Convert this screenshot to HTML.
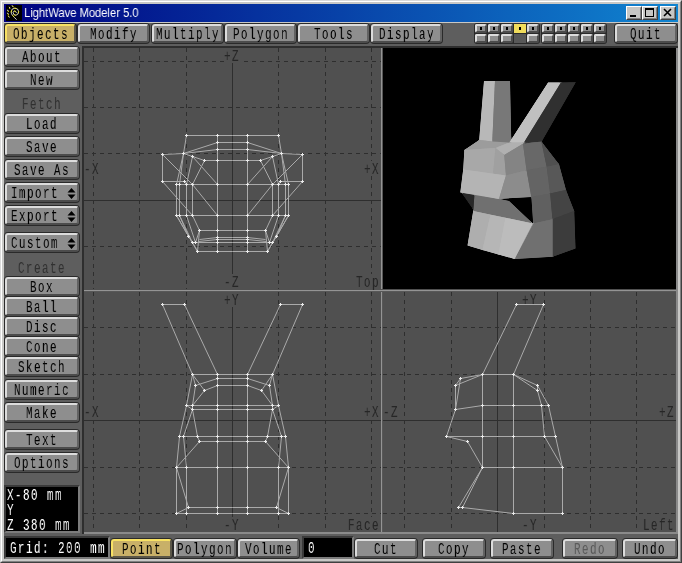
<!DOCTYPE html>
<html><head><meta charset="utf-8"><title>LightWave Modeler 5.0</title>
<style>
html,body{margin:0;padding:0;}
body{width:682px;height:563px;position:relative;overflow:hidden;background:#c8c8c6;font-family:"Liberation Mono",monospace;}
.a{position:absolute;}
#frame{left:0;top:0;width:682px;height:563px;box-sizing:border-box;background:#c8c8c6;
  border-top:1px solid #dadada;border-left:1px solid #dadada;border-right:1px solid #404040;border-bottom:1px solid #404040;}
#frame2{left:1px;top:1px;width:680px;height:561px;box-sizing:border-box;
  border-top:1px solid #fff;border-left:1px solid #fff;border-right:1px solid #808080;border-bottom:1px solid #808080;}
#title{left:4px;top:4px;width:674px;height:18px;background:linear-gradient(to right,#000080 0%,#1084d0 100%);}
#ttext{will-change:transform;left:24px;top:3.5px;height:18px;line-height:18px;color:#fff;font-family:"Liberation Sans",sans-serif;font-size:13px;white-space:nowrap;transform-origin:0 50%;transform:scaleX(0.86);}
#app{left:4px;top:23px;width:674px;height:536px;background:#5e5e5e;}
.wb{top:6px;width:16px;height:14px;box-sizing:border-box;background:#c6c6c4;border:1px solid;border-color:#fff #404040 #404040 #fff;}
.wb i{position:absolute;left:0;top:0;right:0;bottom:0;border:1px solid;border-color:#c6c6c4 #808080 #808080 #c6c6c4;}
.btn{box-sizing:border-box;background:#2a2a2a;border-radius:4px;}
.btn b{position:absolute;left:1px;top:1px;right:1px;bottom:1px;box-sizing:border-box;border-radius:3px;background:#8e8e8e;border:2px solid;border-color:#dcdcdc #626262 #4c4c4c #dcdcdc;font-weight:normal;}
.btn.y b{background:#c8b068;border-color:#f8e264 #5a5648 #5a5648 #f8e264;}
.t{will-change:transform;position:absolute;white-space:nowrap;font-size:16.5px;line-height:17px;height:17px;color:#000;transform-origin:0 0;transform:scaleX(0.66);letter-spacing:2.22px;}
.lab{color:#303030;}
.dis{color:#5a5a5a;}
.w{color:#fff;}
.vl{color:#262626;}
</style></head>
<body>
<div class="a" id="frame"></div><div class="a" id="frame2"></div>
<div class="a" id="title"></div>
<svg class="a" style="left:6px;top:5px" width="16" height="16" viewBox="0 0 16 16">
<rect width="16" height="16" fill="#000"/>
<g fill="none" stroke-width="0.95" stroke-linecap="round" stroke-linejoin="round">
<path d="M10.3 7.5A1.7 2 0 0 0 7.1 7.3A3 3 0 0 0 9.9 10.3A3.4 3.7 0 0 0 12.6 6.6A3.8 3.5 0 0 0 8.8 3.2A3.7 3.9 0 0 0 5.2 7.1C5.2 9.5 7 11 10.3 14.4" stroke="#e0e0e0"/>
<path d="M10.3 7.5A1.7 2 0 0 0 7.1 7.3A3 3 0 0 0 9.9 10.3A3.4 3.7 0 0 0 12.6 6.6A3.8 3.5 0 0 0 8.8 3.2A3.7 3.9 0 0 0 5.2 7.1C5.2 9.5 7 11 10.3 14.4" stroke="#f0e800" stroke-dasharray="1.3 4.2" stroke-dashoffset="-1.2"/>
<path d="M6.2 0.6L6.6 1.4M3.2 2.2L4 2.8M1.3 5.2L2.2 5.6M1.3 8.2L2.2 8.6M2.6 11.2L3.2 12.2" stroke="#e0e0e0"/>
<path d="M7 1.6L7.4 1.8M3.4 3.2L3.8 3.4M2.2 6.2L2.4 6.6M2.2 9.2L2.4 9.6M2.2 11L2.6 11.2" stroke="#f0e800"/>
</g>
</svg>
<div class="a" id="ttext">LightWave Modeler 5.0</div>
<div class="a wb" style="left:626px"><i></i><svg class="a" style="left:0;top:0" width="14" height="12"><rect x="3" y="8" width="6" height="2" fill="#000"/></svg></div>
<div class="a wb" style="left:642px"><i></i><svg class="a" style="left:0;top:0" width="14" height="12"><rect x="2.5" y="1.5" width="8" height="8" fill="none" stroke="#000"/><rect x="2" y="1" width="9" height="2" fill="#000"/></svg></div>
<div class="a wb" style="left:660px"><i></i><svg class="a" style="left:0;top:0" width="14" height="12"><path d="M3 2l7 7M10 2l-7 7" stroke="#000" stroke-width="1.6" fill="none"/></svg></div>
<div class="a" id="app"></div>
<div class="a btn y" style="left:4px;top:23px;width:73px;height:21px"><b></b><span class="t " style="left:8.5px;top:3.0px">Objects</span></div>
<div class="a btn " style="left:77px;top:23px;width:73px;height:21px"><b></b><span class="t " style="left:12.5px;top:3.0px">Modify</span></div>
<div class="a btn " style="left:151px;top:23px;width:73px;height:21px"><b></b><span class="t " style="left:4.5px;top:3.0px">Multiply</span></div>
<div class="a btn " style="left:224px;top:23px;width:73px;height:21px"><b></b><span class="t " style="left:8.5px;top:3.0px">Polygon</span></div>
<div class="a btn " style="left:297px;top:23px;width:73px;height:21px"><b></b><span class="t " style="left:16.5px;top:3.0px">Tools</span></div>
<div class="a btn " style="left:370px;top:23px;width:73px;height:21px"><b></b><span class="t " style="left:8.5px;top:3.0px">Display</span></div>
<div class="a btn " style="left:614px;top:23px;width:64px;height:21px"><b></b><span class="t " style="left:16.0px;top:3.0px">Quit</span></div>
<div class="a" style="left:474px;top:23px;width:66px;height:21px;border-radius:3px;background:#2a2a2a"></div>
<div class="a" style="left:541px;top:23px;width:66px;height:21px;border-radius:3px;background:#2a2a2a"></div>
<div class="a" style="left:475px;top:24px;width:12px;height:9px;box-sizing:border-box;border-radius:2px;background:#8e8e8e;border:2px solid;border-color:#dcdcdc #4c4c4c #4c4c4c #dcdcdc"></div>
<div class="a" style="left:475px;top:34px;width:12px;height:9px;box-sizing:border-box;border-radius:2px;background:#8e8e8e;border:2px solid;border-color:#dcdcdc #4c4c4c #4c4c4c #dcdcdc"></div>
<div class="a" style="left:480px;top:27px;width:2px;height:3px;background:#000"></div>
<div class="a" style="left:488px;top:24px;width:12px;height:9px;box-sizing:border-box;border-radius:2px;background:#8e8e8e;border:2px solid;border-color:#dcdcdc #4c4c4c #4c4c4c #dcdcdc"></div>
<div class="a" style="left:488px;top:34px;width:12px;height:9px;box-sizing:border-box;border-radius:2px;background:#8e8e8e;border:2px solid;border-color:#dcdcdc #4c4c4c #4c4c4c #dcdcdc"></div>
<div class="a" style="left:493px;top:27px;width:2px;height:3px;background:#000"></div>
<div class="a" style="left:501px;top:24px;width:12px;height:9px;box-sizing:border-box;border-radius:2px;background:#8e8e8e;border:2px solid;border-color:#dcdcdc #4c4c4c #4c4c4c #dcdcdc"></div>
<div class="a" style="left:501px;top:34px;width:12px;height:9px;box-sizing:border-box;border-radius:2px;background:#8e8e8e;border:2px solid;border-color:#dcdcdc #4c4c4c #4c4c4c #dcdcdc"></div>
<div class="a" style="left:506px;top:27px;width:2px;height:3px;background:#000"></div>
<div class="a" style="left:514px;top:24px;width:12px;height:9px;background:#f0dc5c"></div>
<div class="a" style="left:514px;top:34px;width:12px;height:9px;background:#585858"></div>
<div class="a" style="left:519px;top:27px;width:2px;height:3px;background:#000"></div>
<div class="a" style="left:527px;top:24px;width:12px;height:9px;box-sizing:border-box;border-radius:2px;background:#8e8e8e;border:2px solid;border-color:#dcdcdc #4c4c4c #4c4c4c #dcdcdc"></div>
<div class="a" style="left:527px;top:34px;width:12px;height:9px;box-sizing:border-box;border-radius:2px;background:#8e8e8e;border:2px solid;border-color:#dcdcdc #4c4c4c #4c4c4c #dcdcdc"></div>
<div class="a" style="left:532px;top:27px;width:2px;height:3px;background:#000"></div>
<div class="a" style="left:542px;top:24px;width:12px;height:9px;box-sizing:border-box;border-radius:2px;background:#8e8e8e;border:2px solid;border-color:#dcdcdc #4c4c4c #4c4c4c #dcdcdc"></div>
<div class="a" style="left:542px;top:34px;width:12px;height:9px;box-sizing:border-box;border-radius:2px;background:#8e8e8e;border:2px solid;border-color:#dcdcdc #4c4c4c #4c4c4c #dcdcdc"></div>
<div class="a" style="left:547px;top:27px;width:2px;height:3px;background:#000"></div>
<div class="a" style="left:555px;top:24px;width:12px;height:9px;box-sizing:border-box;border-radius:2px;background:#8e8e8e;border:2px solid;border-color:#dcdcdc #4c4c4c #4c4c4c #dcdcdc"></div>
<div class="a" style="left:555px;top:34px;width:12px;height:9px;box-sizing:border-box;border-radius:2px;background:#8e8e8e;border:2px solid;border-color:#dcdcdc #4c4c4c #4c4c4c #dcdcdc"></div>
<div class="a" style="left:560px;top:27px;width:2px;height:3px;background:#000"></div>
<div class="a" style="left:568px;top:24px;width:12px;height:9px;box-sizing:border-box;border-radius:2px;background:#8e8e8e;border:2px solid;border-color:#dcdcdc #4c4c4c #4c4c4c #dcdcdc"></div>
<div class="a" style="left:568px;top:34px;width:12px;height:9px;box-sizing:border-box;border-radius:2px;background:#8e8e8e;border:2px solid;border-color:#dcdcdc #4c4c4c #4c4c4c #dcdcdc"></div>
<div class="a" style="left:573px;top:27px;width:2px;height:3px;background:#000"></div>
<div class="a" style="left:581px;top:24px;width:12px;height:9px;box-sizing:border-box;border-radius:2px;background:#8e8e8e;border:2px solid;border-color:#dcdcdc #4c4c4c #4c4c4c #dcdcdc"></div>
<div class="a" style="left:581px;top:34px;width:12px;height:9px;box-sizing:border-box;border-radius:2px;background:#8e8e8e;border:2px solid;border-color:#dcdcdc #4c4c4c #4c4c4c #dcdcdc"></div>
<div class="a" style="left:586px;top:27px;width:2px;height:3px;background:#000"></div>
<div class="a" style="left:594px;top:24px;width:12px;height:9px;box-sizing:border-box;border-radius:2px;background:#8e8e8e;border:2px solid;border-color:#dcdcdc #4c4c4c #4c4c4c #dcdcdc"></div>
<div class="a" style="left:594px;top:34px;width:12px;height:9px;box-sizing:border-box;border-radius:2px;background:#8e8e8e;border:2px solid;border-color:#dcdcdc #4c4c4c #4c4c4c #dcdcdc"></div>
<div class="a" style="left:599px;top:27px;width:2px;height:3px;background:#000"></div>
<div class="a btn " style="left:4px;top:46px;width:76px;height:21px"><b></b><span class="t " style="left:18.0px;top:3.0px">About</span></div>
<div class="a btn " style="left:4px;top:69px;width:76px;height:21px"><b></b><span class="t " style="left:26.0px;top:3.0px">New</span></div>
<div class="a btn " style="left:4px;top:113px;width:76px;height:21px"><b></b><span class="t " style="left:22.0px;top:3.0px">Load</span></div>
<div class="a btn " style="left:4px;top:136px;width:76px;height:21px"><b></b><span class="t " style="left:22.0px;top:3.0px">Save</span></div>
<div class="a btn " style="left:4px;top:159px;width:76px;height:21px"><b></b><span class="t " style="left:10.0px;top:3.0px">Save As</span></div>
<div class="a btn " style="left:4px;top:182px;width:76px;height:21px"><b></b><span class="t " style="left:7.0px;top:3.0px">Import</span></div>
<svg class="a" style="left:67px;top:188px" width="9" height="11" viewBox="0 0 9 11"><path d="M4.5 0L8.5 4.5H0.5ZM0.5 6.5H8.5L4.5 11Z" fill="#000"/></svg>
<div class="a btn " style="left:4px;top:205px;width:76px;height:21px"><b></b><span class="t " style="left:7.0px;top:3.0px">Export</span></div>
<svg class="a" style="left:67px;top:211px" width="9" height="11" viewBox="0 0 9 11"><path d="M4.5 0L8.5 4.5H0.5ZM0.5 6.5H8.5L4.5 11Z" fill="#000"/></svg>
<div class="a btn " style="left:4px;top:232px;width:76px;height:21px"><b></b><span class="t " style="left:7.0px;top:3.0px">Custom</span></div>
<svg class="a" style="left:67px;top:238px" width="9" height="11" viewBox="0 0 9 11"><path d="M4.5 0L8.5 4.5H0.5ZM0.5 6.5H8.5L4.5 11Z" fill="#000"/></svg>
<div class="a btn " style="left:4px;top:276px;width:76px;height:21px"><b></b><span class="t " style="left:26.0px;top:3.0px">Box</span></div>
<div class="a btn " style="left:4px;top:296px;width:76px;height:21px"><b></b><span class="t " style="left:22.0px;top:3.0px">Ball</span></div>
<div class="a btn " style="left:4px;top:316px;width:76px;height:21px"><b></b><span class="t " style="left:22.0px;top:3.0px">Disc</span></div>
<div class="a btn " style="left:4px;top:336px;width:76px;height:21px"><b></b><span class="t " style="left:22.0px;top:3.0px">Cone</span></div>
<div class="a btn " style="left:4px;top:356px;width:76px;height:21px"><b></b><span class="t " style="left:14.0px;top:3.0px">Sketch</span></div>
<div class="a btn " style="left:4px;top:379px;width:76px;height:21px"><b></b><span class="t " style="left:10.0px;top:3.0px">Numeric</span></div>
<div class="a btn " style="left:4px;top:402px;width:76px;height:21px"><b></b><span class="t " style="left:22.0px;top:3.0px">Make</span></div>
<div class="a btn " style="left:4px;top:429px;width:76px;height:21px"><b></b><span class="t " style="left:22.0px;top:3.0px">Text</span></div>
<div class="a btn " style="left:4px;top:452px;width:76px;height:21px"><b></b><span class="t " style="left:10.0px;top:3.0px">Options</span></div>
<span class="t lab" style="left:22.3px;top:96px">Fetch</span>
<span class="t lab" style="left:18.3px;top:259.5px">Create</span>
<div class="a" style="left:4px;top:485px;width:76px;height:48px;box-sizing:border-box;background:#000;border:2px solid;border-color:#3a3a3a #7c7c7c #7c7c7c #3a3a3a"></div>
<span class="t w" style="left:7px;top:487px">X-80 mm</span>
<span class="t w" style="left:7px;top:502px">Y</span>
<span class="t w" style="left:7px;top:517px">Z 380 mm</span>
<div class="a" style="left:4px;top:536px;width:106px;height:23px;box-sizing:border-box;background:#000;border:2px solid;border-color:#3a3a3a #7c7c7c #7c7c7c #3a3a3a"></div>
<span class="t w" style="left:10px;top:540px">Grid: 200 mm</span>
<div class="a btn y" style="left:110px;top:538px;width:63px;height:21px"><b></b><span class="t " style="left:11.5px;top:3.0px">Point</span></div>
<div class="a btn " style="left:173px;top:538px;width:64px;height:21px"><b></b><span class="t " style="left:4.0px;top:3.0px">Polygon</span></div>
<div class="a btn " style="left:237px;top:538px;width:63px;height:21px"><b></b><span class="t " style="left:7.5px;top:3.0px">Volume</span></div>
<div class="a" style="left:302px;top:536px;width:52px;height:23px;box-sizing:border-box;background:#000;border:2px solid;border-color:#3a3a3a #7c7c7c #7c7c7c #3a3a3a"></div>
<span class="t w" style="left:308px;top:540px">0</span>
<div class="a btn " style="left:354px;top:538px;width:64px;height:21px"><b></b><span class="t " style="left:20.0px;top:3.0px">Cut</span></div>
<div class="a btn " style="left:422px;top:538px;width:64px;height:21px"><b></b><span class="t " style="left:16.0px;top:3.0px">Copy</span></div>
<div class="a btn " style="left:490px;top:538px;width:64px;height:21px"><b></b><span class="t " style="left:12.0px;top:3.0px">Paste</span></div>
<div class="a btn " style="left:562px;top:538px;width:56px;height:21px"><b></b><span class="t dis" style="left:12.0px;top:3.0px">Redo</span></div>
<div class="a btn " style="left:622px;top:538px;width:56px;height:21px"><b></b><span class="t " style="left:12.0px;top:3.0px">Undo</span></div>
<svg class="a" style="left:0;top:0" width="682" height="563" viewBox="0 0 682 563" shape-rendering="crispEdges">
<rect x="82" y="46" width="596" height="488" fill="#2e2e2e"/>
<rect x="84" y="48" width="594" height="486" fill="#8a8a8a"/>
<rect x="84" y="48" width="592" height="484" fill="#505050"/>
<rect x="383" y="48" width="293" height="241" fill="#000"/>
<line x1="93.5" y1="48" x2="93.5" y2="290" stroke="#2e2e2e" stroke-width="1" stroke-dasharray="4 4" stroke-dashoffset="0"/>
<line x1="139.5" y1="48" x2="139.5" y2="290" stroke="#2e2e2e" stroke-width="1" stroke-dasharray="4 4" stroke-dashoffset="0"/>
<line x1="186.5" y1="48" x2="186.5" y2="290" stroke="#2e2e2e" stroke-width="1" stroke-dasharray="4 4" stroke-dashoffset="0"/>
<line x1="232.5" y1="48" x2="232.5" y2="290" stroke="#2e2e2e" stroke-width="1"/>
<line x1="278.5" y1="48" x2="278.5" y2="290" stroke="#2e2e2e" stroke-width="1" stroke-dasharray="4 4" stroke-dashoffset="0"/>
<line x1="325.5" y1="48" x2="325.5" y2="290" stroke="#2e2e2e" stroke-width="1" stroke-dasharray="4 4" stroke-dashoffset="0"/>
<line x1="371.5" y1="48" x2="371.5" y2="290" stroke="#2e2e2e" stroke-width="1" stroke-dasharray="4 4" stroke-dashoffset="0"/>
<line x1="84" y1="61.5" x2="381" y2="61.5" stroke="#2e2e2e" stroke-width="1" stroke-dasharray="4 4" stroke-dashoffset="0"/>
<line x1="84" y1="107.5" x2="381" y2="107.5" stroke="#2e2e2e" stroke-width="1" stroke-dasharray="4 4" stroke-dashoffset="0"/>
<line x1="84" y1="153.5" x2="381" y2="153.5" stroke="#2e2e2e" stroke-width="1" stroke-dasharray="4 4" stroke-dashoffset="0"/>
<line x1="84" y1="200.5" x2="381" y2="200.5" stroke="#2e2e2e" stroke-width="1"/>
<line x1="84" y1="246.5" x2="381" y2="246.5" stroke="#2e2e2e" stroke-width="1" stroke-dasharray="4 4" stroke-dashoffset="0"/>
<line x1="93.5" y1="292" x2="93.5" y2="532" stroke="#2e2e2e" stroke-width="1" stroke-dasharray="4 4" stroke-dashoffset="0"/>
<line x1="139.5" y1="292" x2="139.5" y2="532" stroke="#2e2e2e" stroke-width="1" stroke-dasharray="4 4" stroke-dashoffset="0"/>
<line x1="186.5" y1="292" x2="186.5" y2="532" stroke="#2e2e2e" stroke-width="1" stroke-dasharray="4 4" stroke-dashoffset="0"/>
<line x1="232.5" y1="292" x2="232.5" y2="532" stroke="#2e2e2e" stroke-width="1"/>
<line x1="278.5" y1="292" x2="278.5" y2="532" stroke="#2e2e2e" stroke-width="1" stroke-dasharray="4 4" stroke-dashoffset="0"/>
<line x1="325.5" y1="292" x2="325.5" y2="532" stroke="#2e2e2e" stroke-width="1" stroke-dasharray="4 4" stroke-dashoffset="0"/>
<line x1="371.5" y1="292" x2="371.5" y2="532" stroke="#2e2e2e" stroke-width="1" stroke-dasharray="4 4" stroke-dashoffset="0"/>
<line x1="84" y1="327.5" x2="381" y2="327.5" stroke="#2e2e2e" stroke-width="1" stroke-dasharray="4 4" stroke-dashoffset="0"/>
<line x1="84" y1="374.5" x2="381" y2="374.5" stroke="#2e2e2e" stroke-width="1" stroke-dasharray="4 4" stroke-dashoffset="0"/>
<line x1="84" y1="420.5" x2="381" y2="420.5" stroke="#2e2e2e" stroke-width="1"/>
<line x1="84" y1="467.5" x2="381" y2="467.5" stroke="#2e2e2e" stroke-width="1" stroke-dasharray="4 4" stroke-dashoffset="0"/>
<line x1="84" y1="513.5" x2="381" y2="513.5" stroke="#2e2e2e" stroke-width="1" stroke-dasharray="4 4" stroke-dashoffset="0"/>
<line x1="404.5" y1="292" x2="404.5" y2="532" stroke="#2e2e2e" stroke-width="1" stroke-dasharray="4 4" stroke-dashoffset="0"/>
<line x1="451.5" y1="292" x2="451.5" y2="532" stroke="#2e2e2e" stroke-width="1" stroke-dasharray="4 4" stroke-dashoffset="0"/>
<line x1="497.5" y1="292" x2="497.5" y2="532" stroke="#2e2e2e" stroke-width="1"/>
<line x1="544.5" y1="292" x2="544.5" y2="532" stroke="#2e2e2e" stroke-width="1" stroke-dasharray="4 4" stroke-dashoffset="0"/>
<line x1="590.5" y1="292" x2="590.5" y2="532" stroke="#2e2e2e" stroke-width="1" stroke-dasharray="4 4" stroke-dashoffset="0"/>
<line x1="636.5" y1="292" x2="636.5" y2="532" stroke="#2e2e2e" stroke-width="1" stroke-dasharray="4 4" stroke-dashoffset="0"/>
<line x1="383" y1="327.5" x2="676" y2="327.5" stroke="#2e2e2e" stroke-width="1" stroke-dasharray="4 4" stroke-dashoffset="0"/>
<line x1="383" y1="374.5" x2="676" y2="374.5" stroke="#2e2e2e" stroke-width="1" stroke-dasharray="4 4" stroke-dashoffset="0"/>
<line x1="383" y1="420.5" x2="676" y2="420.5" stroke="#2e2e2e" stroke-width="1"/>
<line x1="383" y1="467.5" x2="676" y2="467.5" stroke="#2e2e2e" stroke-width="1" stroke-dasharray="4 4" stroke-dashoffset="0"/>
<line x1="383" y1="513.5" x2="676" y2="513.5" stroke="#2e2e2e" stroke-width="1" stroke-dasharray="4 4" stroke-dashoffset="0"/>
<rect x="224" y="48" width="17" height="15" fill="#505050"/>
<rect x="84" y="161" width="17" height="15" fill="#505050"/>
<rect x="364" y="161" width="17" height="15" fill="#505050"/>
<rect x="224" y="274" width="17" height="15" fill="#505050"/>
<rect x="356" y="274" width="25" height="15" fill="#505050"/>
<rect x="224" y="292" width="17" height="15" fill="#505050"/>
<rect x="84" y="404" width="17" height="15" fill="#505050"/>
<rect x="364" y="404" width="17" height="15" fill="#505050"/>
<rect x="224" y="517" width="17" height="15" fill="#505050"/>
<rect x="348" y="517" width="33" height="15" fill="#505050"/>
<rect x="522" y="292" width="17" height="15" fill="#505050"/>
<rect x="383" y="404" width="17" height="15" fill="#505050"/>
<rect x="659" y="404" width="17" height="15" fill="#505050"/>
<rect x="522" y="517" width="17" height="15" fill="#505050"/>
<rect x="643" y="517" width="33" height="15" fill="#505050"/>
<rect x="381" y="48" width="1" height="484" fill="#949494"/><rect x="382" y="48" width="1" height="484" fill="#585858"/>
<rect x="84" y="289" width="592" height="1" fill="#505050"/><rect x="84" y="290" width="592" height="1" fill="#949494"/><rect x="84" y="291" width="592" height="1" fill="#585858"/>
</svg>
<span class="t vl" style="left:224.3px;top:48px">+Z</span>
<span class="t vl" style="left:84.3px;top:161px">-X</span>
<span class="t vl" style="left:364.3px;top:161px">+X</span>
<span class="t vl" style="left:224.3px;top:274px">-Z</span>
<span class="t vl" style="left:356.3px;top:274px">Top</span>
<span class="t vl" style="left:224.3px;top:292px">+Y</span>
<span class="t vl" style="left:84.3px;top:404px">-X</span>
<span class="t vl" style="left:364.3px;top:404px">+X</span>
<span class="t vl" style="left:224.3px;top:517px">-Y</span>
<span class="t vl" style="left:348.3px;top:517px">Face</span>
<span class="t vl" style="left:522.3px;top:292px">+Y</span>
<span class="t vl" style="left:383.3px;top:404px">-Z</span>
<span class="t vl" style="left:659.3px;top:404px">+Z</span>
<span class="t vl" style="left:522.3px;top:517px">-Y</span>
<span class="t vl" style="left:643.3px;top:517px">Left</span>
<svg class="a" style="left:0;top:0" width="682" height="563" viewBox="0 0 682 563">
<clipPath id="sil"><path clip-rule="evenodd" d="M460.30 192.40 L460.30 192.40 L461.56 192.61 L461.56 192.61 L461.57 192.61 L461.57 192.62 L461.58 192.62 L461.58 192.62 L461.59 192.62 L461.59 192.63 L461.59 192.63 L473.20 209.40 L473.20 209.40 L473.20 209.40 L473.35 207.56 L473.35 207.56 L473.35 207.55 L473.35 207.55 L473.35 207.54 L473.36 207.54 L473.36 207.53 L473.36 207.53 L473.37 207.53 L473.37 207.52 L473.37 207.52 L473.38 207.52 L473.38 207.52 L473.39 207.52 L473.39 207.52 L473.40 207.52 L473.40 207.52 L473.41 207.52 L473.41 207.52 L473.42 207.52 L473.42 207.52 L473.42 207.52 L473.43 207.53 L473.43 207.53 L473.44 207.53 L473.44 207.54 L473.44 207.54 L473.44 207.54 L473.45 207.55 L473.45 207.55 L473.45 207.56 L473.45 207.56 L473.45 207.57 L473.20 211.10 L473.20 211.10 L467.50 245.60 L467.50 245.60 L467.50 245.60 L482.50 249.90 L482.50 249.90 L498.50 254.40 L514.50 258.90 L514.50 258.90 L514.50 258.90 L514.50 258.90 L514.50 258.90 L552.50 256.80 L552.50 256.80 L552.50 256.80 L552.50 256.80 L552.50 256.80 L552.50 256.80 L575.50 248.60 L575.50 248.60 L575.50 248.60 L574.20 211.10 L574.20 211.10 L574.20 211.10 L574.20 211.10 L574.20 211.10 L566.00 190.00 L566.00 190.00 L559.00 164.30 L559.00 164.30 L559.00 164.30 L541.59 141.74 L541.58 141.74 L541.58 141.73 L541.58 141.73 L541.58 141.72 L541.58 141.72 L541.58 141.71 L541.58 141.71 L541.58 141.70 L541.58 141.70 L541.58 141.69 L541.58 141.69 L541.58 141.68 L575.80 82.30 L575.80 82.30 L575.80 82.30 L561.00 82.50 L561.00 82.50 L548.10 82.50 L548.10 82.50 L548.10 82.50 L511.32 139.47 L511.31 139.48 L511.31 139.48 L511.31 139.49 L511.30 139.49 L511.30 139.49 L511.30 139.49 L511.29 139.50 L511.29 139.50 L511.28 139.50 L511.28 139.50 L511.27 139.50 L511.27 139.50 L511.26 139.50 L511.26 139.49 L511.25 139.49 L511.25 139.49 L511.24 139.49 L511.24 139.48 L511.24 139.48 L511.23 139.48 L511.23 139.47 L511.23 139.47 L511.23 139.46 L511.23 139.46 L511.23 139.45 L511.23 139.45 L510.00 81.00 L510.00 81.00 L510.00 81.00 L484.00 81.00 L484.00 81.00 L484.00 81.00 L479.20 139.98 L479.20 139.98 L479.20 139.99 L479.20 139.99 L479.20 140.00 L479.19 140.00 L479.19 140.00 L479.19 140.01 L479.18 140.01 L479.18 140.01 L464.40 150.00 L464.40 150.00 L464.40 150.00 L464.40 150.00 L463.20 169.60 L463.20 169.60 L460.30 192.40Z M523.99 142.62 L523.99 142.61 L523.99 142.61 L524.00 142.61 L524.00 142.61 L524.00 142.60 L524.01 142.60 L524.01 142.60 L524.02 142.60 L524.02 142.60 L534.77 142.23 L534.77 142.23 L534.77 142.23 L534.78 142.23 L534.78 142.23 L534.79 142.23 L534.79 142.24 L534.80 142.24 L534.80 142.24 L534.80 142.25 L534.81 142.25 L534.81 142.25 L534.81 142.26 L534.81 142.26 L534.82 142.27 L534.82 142.27 L534.82 142.28 L534.82 142.28 L534.82 142.29 L534.82 142.29 L534.81 142.30 L534.81 142.30 L534.81 142.31 L534.81 142.31 L534.80 142.31 L534.80 142.32 L534.80 142.32 L534.79 142.32 L534.79 142.32 L534.78 142.33 L534.78 142.33 L534.77 142.33 L523.13 143.78 L523.12 143.78 L523.12 143.78 L523.11 143.78 L523.11 143.78 L523.10 143.78 L523.10 143.78 L523.09 143.78 L523.09 143.77 L523.08 143.77 L523.08 143.77 L523.08 143.76 L523.08 143.76 L523.07 143.75 L523.07 143.75 L523.07 143.74 L523.07 143.74 L523.07 143.73 L523.07 143.73 L523.07 143.72 L523.07 143.72 L523.07 143.72 L523.08 143.71 L523.08 143.71 L523.08 143.70Z M499.00 198.90 L499.00 198.90 L499.00 198.90 L531.35 197.00 L531.36 197.00 L531.36 197.00 L531.37 197.00 L531.37 197.01 L531.37 197.01 L531.38 197.01 L531.38 197.01 L531.39 197.02 L531.39 197.02 L531.39 197.02 L531.40 197.03 L531.40 197.03 L531.40 197.04 L531.40 197.04 L531.40 197.04 L531.40 197.05 L533.20 223.39 L533.20 223.39 L533.20 223.40 L533.20 223.40 L533.20 223.40 L533.20 223.41 L533.19 223.41 L519.76 248.92 L519.76 248.92 L519.75 248.92 L519.75 248.93 L519.75 248.93 L519.74 248.93 L519.74 248.94 L519.73 248.94 L519.73 248.94 L519.73 248.94 L519.72 248.94 L519.72 248.94 L519.71 248.94 L519.71 248.94 L519.70 248.94 L519.70 248.94 L519.69 248.94 L519.69 248.93 L519.68 248.93 L519.68 248.93 L519.68 248.92 L519.67 248.92 L519.67 248.92 L519.67 248.91 L519.67 248.91 L519.67 248.90 L519.67 248.90 L519.67 248.89 L519.67 248.89 L519.67 248.88 L519.67 248.88 L519.67 248.87 L519.67 248.87 L532.80 223.40 L532.80 223.40 L532.80 223.40 L532.80 223.40 L509.00 201.10 L509.00 201.10 L509.00 201.10 L497.75 198.79 L497.74 198.79 L497.74 198.79 L497.73 198.79 L497.73 198.78 L497.73 198.78 L497.72 198.78 L497.72 198.77 L497.72 198.77 L497.71 198.77 L497.71 198.76 L497.71 198.76 L497.71 198.75 L497.71 198.75 L497.71 198.74 L497.71 198.74 L497.71 198.73 L497.71 198.73 L497.71 198.72 L497.71 198.72 L497.72 198.72 L497.72 198.71 L497.72 198.71 L497.73 198.70 L497.73 198.70 L497.73 198.70 L497.74 198.70 L497.74 198.69 L497.75 198.69 L497.75 198.69 L497.76 198.69 L497.76 198.69 L497.77 198.69Z"/></clipPath>
<g clip-path="url(#sil)"><g stroke-width="2.4" stroke-linejoin="round">
<polygon fill="#b8b8b8" stroke="#b8b8b8" points="484,81 495,81 492.3,141.5 479.2,140"/>
<polygon fill="#787878" stroke="#787878" points="495,81 510,81 511.3,143 492.3,143"/>
<polygon fill="#c0c0c0" stroke="#c0c0c0" points="548.1,82.5 561,82.5 524,142.6 509.3,142.6"/>
<polygon fill="#303030" stroke="#303030" points="561,82.5 575.8,82.3 541.4,142 524,142.6"/>
<polygon fill="#9c9c9c" stroke="#9c9c9c" points="464.4,150 479.2,140 492.3,141.5 509.3,142.6 495.5,148"/>
<polygon fill="#b0b0b0" stroke="#b0b0b0" points="495.5,148 509.3,142.6 524,142.6 523,143.8 504.3,154.9"/>
<polygon fill="#a8a8a8" stroke="#a8a8a8" points="464.4,150 495.5,148 493.1,173.7 463.2,169.6"/>
<polygon fill="#a0a0a0" stroke="#a0a0a0" points="495.5,148 504.3,154.9 506,175.5 493.1,173.7"/>
<polygon fill="#707070" stroke="#707070" points="474.4,194 509,201.1 532.8,223.4 473.2,211.1"/>
<polygon fill="#282828" stroke="#282828" points="461.5,192.5 474.4,194.5 473.2,209.4"/>
<polygon fill="#b4b4b4" stroke="#b4b4b4" points="463.2,169.6 493.1,173.7 506,175.5 499,198.9 460.3,192.4"/>
<polygon fill="#848484" stroke="#848484" points="504.3,154.9 523,143.8 526.6,170.2 506,175.5"/>
<polygon fill="#8c8c8c" stroke="#8c8c8c" points="506,175.5 526.6,170.2 531.4,197 499,198.9"/>
<polygon fill="#686868" stroke="#686868" points="523,143.8 541.4,141.5 546.7,166.7 526.6,170.2"/>
<polygon fill="#646464" stroke="#646464" points="526.6,170.2 546.7,166.7 550.2,193.6 531.4,197"/>
<polygon fill="#505050" stroke="#505050" points="541.4,141.5 559,164.3 546.7,166.7"/>
<polygon fill="#585858" stroke="#585858" points="546.7,166.7 559,164.3 566,190 550.2,193.6"/>
<polygon fill="#606060" stroke="#606060" points="531.4,197 550.2,193.6 552.5,219.3 533.2,223.4"/>
<polygon fill="#444444" stroke="#444444" points="550.2,193.6 566,190 574.2,211.1 552.5,219.3"/>
<polygon fill="#3c3c3c" stroke="#3c3c3c" points="552.5,219.3 574.2,211.1 575.5,248.6 552.5,256.8"/>
<polygon fill="#707070" stroke="#707070" points="533.2,223.4 552.5,219.3 552.5,256.8 514.5,258.9"/>
<polygon fill="#aeaeae" stroke="#aeaeae" points="473.2,211.1 490.5,214.7 482.5,249.9 467.5,245.6"/>
<polygon fill="#b6b6b6" stroke="#b6b6b6" points="490.5,214.7 505.5,217.8 498.5,254.4 482.5,249.9"/>
<polygon fill="#bcbcbc" stroke="#bcbcbc" points="505.5,217.8 532.8,223.4 514.5,258.9 498.5,254.4"/>
</g><g>
<polygon fill="#b8b8b8" points="484,81 495,81 492.3,141.5 479.2,140"/>
<polygon fill="#787878" points="495,81 510,81 511.3,143 492.3,143"/>
<polygon fill="#c0c0c0" points="548.1,82.5 561,82.5 524,142.6 509.3,142.6"/>
<polygon fill="#303030" points="561,82.5 575.8,82.3 541.4,142 524,142.6"/>
<polygon fill="#9c9c9c" points="464.4,150 479.2,140 492.3,141.5 509.3,142.6 495.5,148"/>
<polygon fill="#b0b0b0" points="495.5,148 509.3,142.6 524,142.6 523,143.8 504.3,154.9"/>
<polygon fill="#a8a8a8" points="464.4,150 495.5,148 493.1,173.7 463.2,169.6"/>
<polygon fill="#a0a0a0" points="495.5,148 504.3,154.9 506,175.5 493.1,173.7"/>
<polygon fill="#707070" points="474.4,194 509,201.1 532.8,223.4 473.2,211.1"/>
<polygon fill="#282828" points="461.5,192.5 474.4,194.5 473.2,209.4"/>
<polygon fill="#b4b4b4" points="463.2,169.6 493.1,173.7 506,175.5 499,198.9 460.3,192.4"/>
<polygon fill="#848484" points="504.3,154.9 523,143.8 526.6,170.2 506,175.5"/>
<polygon fill="#8c8c8c" points="506,175.5 526.6,170.2 531.4,197 499,198.9"/>
<polygon fill="#686868" points="523,143.8 541.4,141.5 546.7,166.7 526.6,170.2"/>
<polygon fill="#646464" points="526.6,170.2 546.7,166.7 550.2,193.6 531.4,197"/>
<polygon fill="#505050" points="541.4,141.5 559,164.3 546.7,166.7"/>
<polygon fill="#585858" points="546.7,166.7 559,164.3 566,190 550.2,193.6"/>
<polygon fill="#606060" points="531.4,197 550.2,193.6 552.5,219.3 533.2,223.4"/>
<polygon fill="#444444" points="550.2,193.6 566,190 574.2,211.1 552.5,219.3"/>
<polygon fill="#3c3c3c" points="552.5,219.3 574.2,211.1 575.5,248.6 552.5,256.8"/>
<polygon fill="#707070" points="533.2,223.4 552.5,219.3 552.5,256.8 514.5,258.9"/>
<polygon fill="#aeaeae" points="473.2,211.1 490.5,214.7 482.5,249.9 467.5,245.6"/>
<polygon fill="#b6b6b6" points="490.5,214.7 505.5,217.8 498.5,254.4 482.5,249.9"/>
<polygon fill="#bcbcbc" points="505.5,217.8 532.8,223.4 514.5,258.9 498.5,254.4"/>
</g></g>
<path d="M186.5 135.5 L217.5 135.5 L232.5 135.5 M278.5 135.5 L247.5 135.5 L232.5 135.5 M217.5 142.5 L232.5 142.5 M247.5 142.5 L232.5 142.5 M217.5 149.5 L232.5 149.5 M247.5 149.5 L232.5 149.5 M204.5 160.5 L217.5 160.5 L232.5 160.5 M260.5 160.5 L247.5 160.5 L232.5 160.5 M176.5 184.5 L179.5 184.5 L186.5 184.5 L192.5 184.5 L217.5 184.5 L232.5 184.5 M288.5 184.5 L285.5 184.5 L278.5 184.5 L272.5 184.5 L247.5 184.5 L232.5 184.5 M176.5 215.5 L179.5 215.5 L186.5 215.5 L192.5 215.5 L217.5 215.5 L232.5 215.5 M288.5 215.5 L285.5 215.5 L278.5 215.5 L272.5 215.5 L247.5 215.5 L232.5 215.5 M199.5 230.5 L217.5 230.5 L232.5 230.5 M265.5 230.5 L247.5 230.5 L232.5 230.5 M199.5 239.5 L217.5 237.5 L232.5 237.5 M265.5 239.5 L247.5 237.5 L232.5 237.5 M198.5 241.5 L217.5 239.5 L232.5 239.5 M266.5 241.5 L247.5 239.5 L232.5 239.5 M192.5 242.5 L195.5 242.5 L217.5 242.5 L232.5 242.5 M272.5 242.5 L269.5 242.5 L247.5 242.5 L232.5 242.5 M197.5 251.5 L217.5 251.5 L232.5 251.5 M267.5 251.5 L247.5 251.5 L232.5 251.5 M162.5 154.5 L183.5 153.5 M302.5 154.5 L281.5 153.5 M162.5 181.5 L184.5 181.5 M302.5 181.5 L280.5 181.5 M162.5 154.5 L162.5 181.5 M302.5 154.5 L302.5 181.5 M217.5 135.5 L217.5 251.5 M247.5 135.5 L247.5 251.5 M176.5 184.5 L176.5 215.5 M288.5 184.5 L288.5 215.5 M179.5 184.5 L179.5 215.5 M285.5 184.5 L285.5 215.5 M186.5 184.5 L186.5 215.5 M278.5 184.5 L278.5 215.5 M192.5 184.5 L192.5 215.5 M272.5 184.5 L272.5 215.5 M186.5 135.5 L183.5 153.5 L176.5 184.5 M278.5 135.5 L281.5 153.5 L288.5 184.5 M183.5 153.5 L179.5 184.5 M281.5 153.5 L285.5 184.5 M183.5 153.5 L217.5 142.5 M281.5 153.5 L247.5 142.5 M183.5 153.5 L217.5 149.5 M281.5 153.5 L247.5 149.5 M183.5 153.5 L192.5 156.5 L204.5 160.5 M281.5 153.5 L272.5 156.5 L260.5 160.5 M192.5 156.5 L186.5 184.5 M272.5 156.5 L278.5 184.5 M204.5 160.5 L192.5 184.5 M260.5 160.5 L272.5 184.5 M192.5 156.5 L217.5 184.5 M272.5 156.5 L247.5 184.5 M162.5 154.5 L192.5 184.5 L217.5 215.5 M302.5 154.5 L272.5 184.5 L247.5 215.5 M162.5 181.5 L192.5 215.5 M302.5 181.5 L272.5 215.5 M184.5 181.5 L186.5 184.5 M280.5 181.5 L278.5 184.5 M176.5 215.5 L188.5 236.5 L192.5 242.5 L197.5 251.5 M288.5 215.5 L276.5 236.5 L272.5 242.5 L267.5 251.5 M176.5 215.5 L197.5 251.5 M288.5 215.5 L267.5 251.5 M179.5 215.5 L192.5 242.5 M285.5 215.5 L272.5 242.5 M186.5 215.5 L195.5 242.5 M278.5 215.5 L269.5 242.5 M192.5 215.5 L199.5 230.5 M272.5 215.5 L265.5 230.5 M199.5 230.5 L197.5 251.5 M265.5 230.5 L267.5 251.5 M179.5 215.5 L188.5 236.5 M285.5 215.5 L276.5 236.5 M195.5 242.5 L199.5 230.5 M269.5 242.5 L265.5 230.5" fill="none" stroke="#aaaaaa" stroke-width="1"/>
<path d="M161 154h3v1h-3zM162 153h1v3h-1zM161 181h3v1h-3zM162 180h1v3h-1zM175 184h3v1h-3zM176 183h1v3h-1zM175 215h3v1h-3zM176 214h1v3h-1zM178 184h3v1h-3zM179 183h1v3h-1zM178 215h3v1h-3zM179 214h1v3h-1zM182 153h3v1h-3zM183 152h1v3h-1zM183 181h3v1h-3zM184 180h1v3h-1zM185 135h3v1h-3zM186 134h1v3h-1zM185 184h3v1h-3zM186 183h1v3h-1zM185 215h3v1h-3zM186 214h1v3h-1zM187 236h3v1h-3zM188 235h1v3h-1zM191 156h3v1h-3zM192 155h1v3h-1zM191 184h3v1h-3zM192 183h1v3h-1zM191 215h3v1h-3zM192 214h1v3h-1zM191 242h3v1h-3zM192 241h1v3h-1zM194 242h3v1h-3zM195 241h1v3h-1zM196 251h3v1h-3zM197 250h1v3h-1zM198 230h3v1h-3zM199 229h1v3h-1zM203 160h3v1h-3zM204 159h1v3h-1zM216 135h3v1h-3zM217 134h1v3h-1zM216 142h3v1h-3zM217 141h1v3h-1zM216 149h3v1h-3zM217 148h1v3h-1zM216 160h3v1h-3zM217 159h1v3h-1zM216 184h3v1h-3zM217 183h1v3h-1zM216 215h3v1h-3zM217 214h1v3h-1zM216 230h3v1h-3zM217 229h1v3h-1zM216 237h3v1h-3zM217 236h1v3h-1zM216 239h3v1h-3zM217 238h1v3h-1zM216 242h3v1h-3zM217 241h1v3h-1zM216 251h3v1h-3zM217 250h1v3h-1zM246 135h3v1h-3zM247 134h1v3h-1zM246 142h3v1h-3zM247 141h1v3h-1zM246 149h3v1h-3zM247 148h1v3h-1zM246 160h3v1h-3zM247 159h1v3h-1zM246 184h3v1h-3zM247 183h1v3h-1zM246 215h3v1h-3zM247 214h1v3h-1zM246 230h3v1h-3zM247 229h1v3h-1zM246 237h3v1h-3zM247 236h1v3h-1zM246 239h3v1h-3zM247 238h1v3h-1zM246 242h3v1h-3zM247 241h1v3h-1zM246 251h3v1h-3zM247 250h1v3h-1zM259 160h3v1h-3zM260 159h1v3h-1zM264 230h3v1h-3zM265 229h1v3h-1zM266 251h3v1h-3zM267 250h1v3h-1zM268 242h3v1h-3zM269 241h1v3h-1zM271 156h3v1h-3zM272 155h1v3h-1zM271 184h3v1h-3zM272 183h1v3h-1zM271 215h3v1h-3zM272 214h1v3h-1zM271 242h3v1h-3zM272 241h1v3h-1zM275 236h3v1h-3zM276 235h1v3h-1zM277 135h3v1h-3zM278 134h1v3h-1zM277 184h3v1h-3zM278 183h1v3h-1zM277 215h3v1h-3zM278 214h1v3h-1zM279 181h3v1h-3zM280 180h1v3h-1zM280 153h3v1h-3zM281 152h1v3h-1zM284 184h3v1h-3zM285 183h1v3h-1zM284 215h3v1h-3zM285 214h1v3h-1zM287 184h3v1h-3zM288 183h1v3h-1zM287 215h3v1h-3zM288 214h1v3h-1zM301 154h3v1h-3zM302 153h1v3h-1zM301 181h3v1h-3zM302 180h1v3h-1z" fill="#ececec" shape-rendering="crispEdges"/>
<path d="M162.5 304.5 L184.5 304.5 M302.5 304.5 L280.5 304.5 M162.5 304.5 L192.5 374.5 M302.5 304.5 L272.5 374.5 M184.5 304.5 L217.5 374.5 M280.5 304.5 L247.5 374.5 M192.5 374.5 L217.5 374.5 L232.5 374.5 M272.5 374.5 L247.5 374.5 L232.5 374.5 M217.5 378.5 L232.5 378.5 M247.5 378.5 L232.5 378.5 M195.5 385.5 L217.5 378.5 M269.5 385.5 L247.5 378.5 M217.5 385.5 L232.5 385.5 M247.5 385.5 L232.5 385.5 M204.5 390.5 L217.5 385.5 M261.5 390.5 L247.5 385.5 M192.5 374.5 L195.5 385.5 L192.5 405.5 M272.5 374.5 L269.5 385.5 L272.5 405.5 M192.5 374.5 L204.5 390.5 L192.5 405.5 M272.5 374.5 L261.5 390.5 L272.5 405.5 M192.5 374.5 L186.5 405.5 L179.5 436.5 L176.5 467.5 L176.5 513.5 M272.5 374.5 L278.5 405.5 L285.5 436.5 L288.5 467.5 L288.5 513.5 M186.5 405.5 L192.5 405.5 L217.5 405.5 L232.5 405.5 M278.5 405.5 L272.5 405.5 L247.5 405.5 L232.5 405.5 M192.5 409.5 L217.5 409.5 L232.5 409.5 M272.5 409.5 L247.5 409.5 L232.5 409.5 M192.5 405.5 L192.5 409.5 M272.5 405.5 L272.5 409.5 M186.5 405.5 L192.5 409.5 M278.5 405.5 L272.5 409.5 M192.5 409.5 L183.5 436.5 L186.5 467.5 L186.5 513.5 M272.5 409.5 L281.5 436.5 L278.5 467.5 L278.5 513.5 M192.5 409.5 L197.5 436.5 L199.5 441.5 M272.5 409.5 L267.5 436.5 L265.5 441.5 M179.5 436.5 L183.5 436.5 L197.5 436.5 L217.5 436.5 L232.5 436.5 M285.5 436.5 L281.5 436.5 L267.5 436.5 L247.5 436.5 L232.5 436.5 M199.5 441.5 L217.5 441.5 L232.5 441.5 M265.5 441.5 L247.5 441.5 L232.5 441.5 M199.5 441.5 L176.5 467.5 M265.5 441.5 L288.5 467.5 M176.5 467.5 L186.5 467.5 L217.5 467.5 L232.5 467.5 M288.5 467.5 L278.5 467.5 L247.5 467.5 L232.5 467.5 M176.5 467.5 L188.5 507.5 M288.5 467.5 L276.5 507.5 M188.5 507.5 L217.5 507.5 L232.5 507.5 M276.5 507.5 L247.5 507.5 L232.5 507.5 M176.5 513.5 L188.5 507.5 M288.5 513.5 L276.5 507.5 M176.5 513.5 L186.5 513.5 L217.5 513.5 L232.5 513.5 M288.5 513.5 L278.5 513.5 L247.5 513.5 L232.5 513.5 M217.5 374.5 L217.5 513.5 M247.5 374.5 L247.5 513.5" fill="none" stroke="#aaaaaa" stroke-width="1"/>
<path d="M161 304h3v1h-3zM162 303h1v3h-1zM175 467h3v1h-3zM176 466h1v3h-1zM175 513h3v1h-3zM176 512h1v3h-1zM178 436h3v1h-3zM179 435h1v3h-1zM182 436h3v1h-3zM183 435h1v3h-1zM183 304h3v1h-3zM184 303h1v3h-1zM185 405h3v1h-3zM186 404h1v3h-1zM185 467h3v1h-3zM186 466h1v3h-1zM185 513h3v1h-3zM186 512h1v3h-1zM187 507h3v1h-3zM188 506h1v3h-1zM191 374h3v1h-3zM192 373h1v3h-1zM191 405h3v1h-3zM192 404h1v3h-1zM191 409h3v1h-3zM192 408h1v3h-1zM194 385h3v1h-3zM195 384h1v3h-1zM196 436h3v1h-3zM197 435h1v3h-1zM198 441h3v1h-3zM199 440h1v3h-1zM203 390h3v1h-3zM204 389h1v3h-1zM216 374h3v1h-3zM217 373h1v3h-1zM216 378h3v1h-3zM217 377h1v3h-1zM216 385h3v1h-3zM217 384h1v3h-1zM216 405h3v1h-3zM217 404h1v3h-1zM216 409h3v1h-3zM217 408h1v3h-1zM216 436h3v1h-3zM217 435h1v3h-1zM216 441h3v1h-3zM217 440h1v3h-1zM216 467h3v1h-3zM217 466h1v3h-1zM216 507h3v1h-3zM217 506h1v3h-1zM216 513h3v1h-3zM217 512h1v3h-1zM246 374h3v1h-3zM247 373h1v3h-1zM246 378h3v1h-3zM247 377h1v3h-1zM246 385h3v1h-3zM247 384h1v3h-1zM246 405h3v1h-3zM247 404h1v3h-1zM246 409h3v1h-3zM247 408h1v3h-1zM246 436h3v1h-3zM247 435h1v3h-1zM246 441h3v1h-3zM247 440h1v3h-1zM246 467h3v1h-3zM247 466h1v3h-1zM246 507h3v1h-3zM247 506h1v3h-1zM246 513h3v1h-3zM247 512h1v3h-1zM260 390h3v1h-3zM261 389h1v3h-1zM264 441h3v1h-3zM265 440h1v3h-1zM266 436h3v1h-3zM267 435h1v3h-1zM268 385h3v1h-3zM269 384h1v3h-1zM271 374h3v1h-3zM272 373h1v3h-1zM271 405h3v1h-3zM272 404h1v3h-1zM271 409h3v1h-3zM272 408h1v3h-1zM275 507h3v1h-3zM276 506h1v3h-1zM277 405h3v1h-3zM278 404h1v3h-1zM277 467h3v1h-3zM278 466h1v3h-1zM277 513h3v1h-3zM278 512h1v3h-1zM279 304h3v1h-3zM280 303h1v3h-1zM280 436h3v1h-3zM281 435h1v3h-1zM284 436h3v1h-3zM285 435h1v3h-1zM287 467h3v1h-3zM288 466h1v3h-1zM287 513h3v1h-3zM288 512h1v3h-1zM301 304h3v1h-3zM302 303h1v3h-1z" fill="#ececec" shape-rendering="crispEdges"/>
<path d="M516.5 304.5 L543.5 304.5 M516.5 304.5 L482.5 374.5 M543.5 304.5 L513.5 374.5 M482.5 374.5 L513.5 374.5 M482.5 374.5 L460.5 378.5 L455.5 385.5 L455.5 409.5 M482.5 374.5 L455.5 385.5 M460.5 378.5 L455.5 409.5 M455.5 409.5 L482.5 405.5 L513.5 405.5 L541.5 405.5 L548.5 405.5 M513.5 374.5 L537.5 385.5 L548.5 405.5 L555.5 436.5 L562.5 467.5 M513.5 374.5 L537.5 390.5 L541.5 405.5 L544.5 436.5 L562.5 467.5 M537.5 385.5 L537.5 390.5 M455.5 409.5 L446.5 436.5 M446.5 436.5 L482.5 436.5 L513.5 436.5 L544.5 436.5 L555.5 436.5 M446.5 436.5 L467.5 441.5 L482.5 467.5 M482.5 467.5 L513.5 467.5 L562.5 467.5 M482.5 467.5 L458.5 507.5 M482.5 467.5 L462.5 507.5 M458.5 507.5 L462.5 507.5 L513.5 513.5 M513.5 513.5 L562.5 513.5 M562.5 467.5 L562.5 513.5 M482.5 374.5 L482.5 467.5 M513.5 374.5 L513.5 513.5" fill="none" stroke="#aaaaaa" stroke-width="1"/>
<path d="M445 436h3v1h-3zM446 435h1v3h-1zM454 385h3v1h-3zM455 384h1v3h-1zM454 409h3v1h-3zM455 408h1v3h-1zM457 507h3v1h-3zM458 506h1v3h-1zM459 378h3v1h-3zM460 377h1v3h-1zM461 507h3v1h-3zM462 506h1v3h-1zM466 441h3v1h-3zM467 440h1v3h-1zM481 374h3v1h-3zM482 373h1v3h-1zM481 405h3v1h-3zM482 404h1v3h-1zM481 436h3v1h-3zM482 435h1v3h-1zM481 467h3v1h-3zM482 466h1v3h-1zM512 374h3v1h-3zM513 373h1v3h-1zM512 405h3v1h-3zM513 404h1v3h-1zM512 436h3v1h-3zM513 435h1v3h-1zM512 467h3v1h-3zM513 466h1v3h-1zM512 513h3v1h-3zM513 512h1v3h-1zM515 304h3v1h-3zM516 303h1v3h-1zM536 385h3v1h-3zM537 384h1v3h-1zM536 390h3v1h-3zM537 389h1v3h-1zM540 405h3v1h-3zM541 404h1v3h-1zM542 304h3v1h-3zM543 303h1v3h-1zM543 436h3v1h-3zM544 435h1v3h-1zM547 405h3v1h-3zM548 404h1v3h-1zM554 436h3v1h-3zM555 435h1v3h-1zM561 467h3v1h-3zM562 466h1v3h-1zM561 513h3v1h-3zM562 512h1v3h-1z" fill="#ececec" shape-rendering="crispEdges"/>
</svg>
</body></html>
